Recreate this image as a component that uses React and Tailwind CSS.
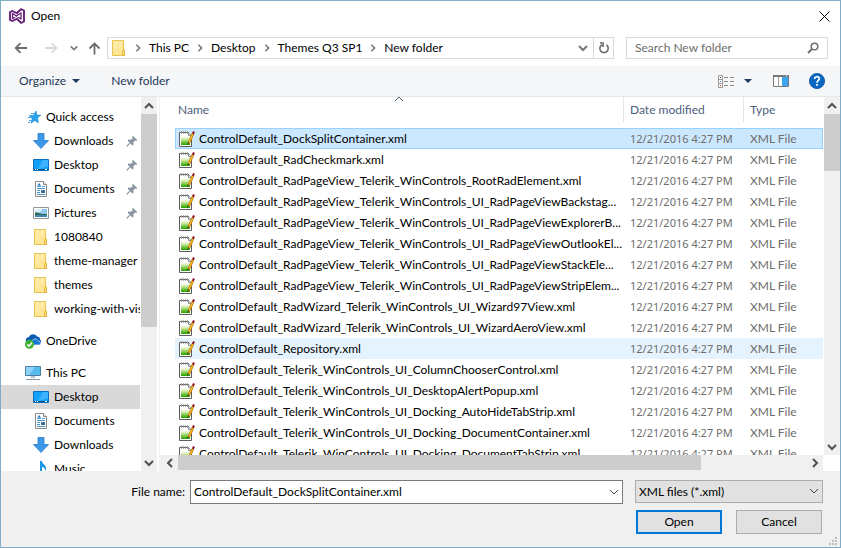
import React from "react";

const FILES = [
  "ControlDefault_DockSplitContainer.xml",
  "ControlDefault_RadCheckmark.xml",
  "ControlDefault_RadPageView_Telerik_WinControls_RootRadElement.xml",
  "ControlDefault_RadPageView_Telerik_WinControls_UI_RadPageViewBackstag...",
  "ControlDefault_RadPageView_Telerik_WinControls_UI_RadPageViewExplorerB...",
  "ControlDefault_RadPageView_Telerik_WinControls_UI_RadPageViewOutlookEl...",
  "ControlDefault_RadPageView_Telerik_WinControls_UI_RadPageViewStackEle...",
  "ControlDefault_RadPageView_Telerik_WinControls_UI_RadPageViewStripElem...",
  "ControlDefault_RadWizard_Telerik_WinControls_UI_Wizard97View.xml",
  "ControlDefault_RadWizard_Telerik_WinControls_UI_WizardAeroView.xml",
  "ControlDefault_Repository.xml",
  "ControlDefault_Telerik_WinControls_UI_ColumnChooserControl.xml",
  "ControlDefault_Telerik_WinControls_UI_DesktopAlertPopup.xml",
  "ControlDefault_Telerik_WinControls_UI_Docking_AutoHideTabStrip.xml",
  "ControlDefault_Telerik_WinControls_UI_Docking_DocumentContainer.xml",
  "ControlDefault_Telerik_WinControls_UI_Docking_DocumentTabStrip.xml",
];

const PATH = ["This PC", "Desktop", "Themes Q3 SP1", "New folder"];

function Chevron({ dir = "down", className = "" }) {
  const d = {
    down: "M1 3l4 4 4-4",
    up: "M1 7l4-4 4 4",
    left: "M7 1L3 5l4 4",
    right: "M3 1l4 4-4 4",
  }[dir];
  return (
    <svg viewBox="0 0 10 10" fill="none" stroke="currentColor" aria-hidden="true" className={`shrink-0 ${className}`}>
      <path d={d} />
    </svg>
  );
}

function Triangle() {
  return (
    <svg width="8" height="4" viewBox="0 0 8 4" aria-hidden="true">
      <path d="M0 0h8L4 4z" fill="#1e395b" />
    </svg>
  );
}

function FolderIcon() {
  return (
    <svg width="16" height="16" viewBox="0 0 16 16" aria-hidden="true">
      <path d="M1.500.5h11v9.500h1v5.500h-12z" fill="#ffe694" stroke="#e8c252" />
      <path d="M2 1h10v4L2 12z" fill="#ffeaa5" />
      <path d="M11.500 15.500v-4l1-1.500h1v5.500z" fill="#ffe082" stroke="#e3b53c" />
    </svg>
  );
}

function StarIcon() {
  return (
    <svg width="16" height="16" viewBox="0 0 16 16" aria-hidden="true">
      <path d="M11 2l.8 4 4 .3-3.300 2.500.8 5L9.800 11.500 6 14l1.200-4.200L4.500 6.700l4.200-.4z" fill="#29a3ee" stroke="#1686d0" strokeWidth=".6" />
      <path d="M6 4.500h3M4 6.500h2M3 8.500h4M4 11.500h3M3 13.500h2" stroke="#4aa8e0" />
    </svg>
  );
}

function DownloadIcon() {
  return (
    <svg width="16" height="16" viewBox="0 0 16 16" aria-hidden="true">
      <path d="M5 .5h6v7h4.500L8 15.500.5 7.500H5z" fill="#3b98e8" stroke="#2b7cc7" strokeWidth=".8" />
    </svg>
  );
}

function DesktopIcon() {
  return (
    <svg width="16" height="16" viewBox="0 0 16 16" aria-hidden="true">
      <path d="M.5 2.500h15v11H.5z" fill="#12a0fb" stroke="#0c6fc0" />
      <path d="M10 3h5v6L7 12H5z" fill="#3bb3ff" />
      <path d="M1 12.500h14" stroke="#064f91" />
      <path d="M2 12.500h1M4 12.500h1M12 12.500h2" stroke="#fff" />
    </svg>
  );
}

function DocumentIcon() {
  return (
    <svg width="16" height="16" viewBox="0 0 16 16" aria-hidden="true">
      <path d="M2.500.5h8l3 3v12h-11z" fill="#fff" stroke="#8a8a8a" />
      <path d="M10.500.5v3h3" fill="#eee" stroke="#8a8a8a" />
      <path d="M4.500 6l1.700-3.500L7.500 6M5 5h2.500" stroke="#1b7cc9" fill="none" />
      <path d="M9 5.500h3M4 7.500h8M4 9.500h3M4 11.500h3M4 13.500h8" stroke="#4b93c9" />
      <path d="M8 9h4v3H8z" fill="#3a6f9c" />
    </svg>
  );
}

function PicturesIcon() {
  return (
    <svg width="16" height="16" viewBox="0 0 16 16" aria-hidden="true">
      <path d="M.5 2.500h15v11H.5z" fill="#fff" stroke="#8f9498" />
      <path d="M2 4h12v8H2z" fill="#8cc8ee" />
      <path d="M2 4h7v2l-4 1.500H2z" fill="#d9eefb" />
      <path d="M2 7.500c3-.5 5 2 12 1.500v1H2z" fill="#2f6b4a" />
      <path d="M2 10h12v2H2z" fill="#3f86b5" />
    </svg>
  );
}

function OneDriveIcon() {
  return (
    <svg width="16" height="16" viewBox="0 0 16 16" aria-hidden="true">
      <path d="M1 9c-1-3 1-5 3-5 1-3 6-4 8-.5 2 0 3 1 3 3 2 1 1 4.500-1 4.500H3z" fill="#0b5cb5" />
      <path d="M5 12c-1-3 1-4.500 2.500-4.500C9 5 12 5.500 13 8c3 0 3.500 4 1 4z" fill="#1377d6" stroke="#fff" strokeWidth=".6" />
      <circle cx="4.500" cy="11.300" r="4.500" fill="#3fb034" />
      <path d="M2.200 11.300l1.800 1.900 3-3.500" stroke="#fff" strokeWidth="1.400" fill="none" />
    </svg>
  );
}

function ComputerIcon() {
  return (
    <svg width="16" height="16" viewBox="0 0 16 16" aria-hidden="true">
      <path d="M.5 1.500h15v9H.5z" fill="#58b8f0" stroke="#4d7f9e" />
      <path d="M1 2h9L4 10H1z" fill="#8fd3f8" />
      <path d="M6 11h4v2H6z" fill="#b5c3cc" />
      <path d="M1 14.500h14" stroke="#8499a6" />
    </svg>
  );
}

function MusicIcon() {
  return (
    <svg width="16" height="16" viewBox="0 0 16 16" aria-hidden="true">
      <path d="M7 0h2c0 3 4 4 4 7 0 2-1 3-1 3 0-3-1-4-3-4v7c0 3-5 3.500-5 1s2-2.500 3-2z" fill="#1b95e8" />
    </svg>
  );
}

function PinIcon() {
  return (
    <svg width="12" height="12" viewBox="0 0 12 12" aria-hidden="true">
      <path d="M7 .8L11.200 5l-1 .9-1.200-.3-1.600 1.800.2 2.200-1.100 1L1.600 5.700l1-1.100 2.200.2L6.600 3.200 6.200 1.800z" fill="#8b97a3" />
      <path d="M4.200 7.800L.7 11.300" stroke="#8b97a3" strokeWidth="1.200" />
    </svg>
  );
}

function XmlIcon() {
  return (
    <svg width="16" height="16" viewBox="0 0 16 16" aria-hidden="true" className="shrink-0">
      <defs>
        <linearGradient id="page" x1="0" y1="0" x2="0" y2="1">
          <stop offset=".2" stopColor="#fff" />
          <stop offset=".45" stopColor="#d5edaa" />
          <stop offset=".95" stopColor="#2fa800" />
        </linearGradient>
      </defs>
      <path d="M.5 1.500h9l3 3v11H.5z" fill="#fff" stroke="#5c5c5c" />
      <path d="M2 3h7l2 2v9H2z" fill="url(#page)" />
      <path d="M9.500 1.500v3h3" fill="#f2f2f2" stroke="#777" strokeWidth=".8" />
      <path d="M2.500 0v3M4.500 0v3M6.500 0v3M8.500 0v3" stroke="#999" strokeWidth=".8" />
      <path d="M13.800 3L9.800 12" stroke="#8a6a18" strokeWidth="2.600" />
      <path d="M13.800 3L9.800 11.800" stroke="#f8b01c" strokeWidth="1.800" />
      <path d="M8.600 11.300l1.800.8-1.900 1.900z" fill="#4a3a20" />
      <path d="M13.800 3l1.200-2.500" stroke="#8c1020" strokeWidth="2" />
    </svg>
  );
}

const TREE = [
  { label: "Quick access", Icon: StarIcon, root: true },
  { label: "Downloads", Icon: DownloadIcon, pin: true },
  { label: "Desktop", Icon: DesktopIcon, pin: true },
  { label: "Documents", Icon: DocumentIcon, pin: true },
  { label: "Pictures", Icon: PicturesIcon, pin: true },
  { label: "1080840", Icon: FolderIcon },
  { label: "theme-manager", Icon: FolderIcon },
  { label: "themes", Icon: FolderIcon },
  { label: "working-with-vis", Icon: FolderIcon },
  { label: "OneDrive", Icon: OneDriveIcon, root: true, gap: true },
  { label: "This PC", Icon: ComputerIcon, root: true, gap: true },
  { label: "Desktop", Icon: DesktopIcon, current: true },
  { label: "Documents", Icon: DocumentIcon },
  { label: "Downloads", Icon: DownloadIcon },
  { label: "Music", Icon: MusicIcon },
];

function VerticalScroll({ thumb }) {
  return (
    <div className="flex w-4 shrink-0 flex-col bg-[#f0f0f0] text-[#505050]">
      <button aria-label="Scroll up" className="grid h-[17px] shrink-0 place-items-center">
        <Chevron dir="up" className="w-2.5 stroke-2" />
      </button>
      <div className="min-h-0 flex-1">
        <div className={`bg-[#cdcdcd] ${thumb}`} />
      </div>
      <button aria-label="Scroll down" className="grid h-[17px] shrink-0 place-items-center">
        <Chevron className="w-2.5 stroke-2" />
      </button>
    </div>
  );
}

function TitleBar() {
  return (
    <header className="flex h-[30px] shrink-0 items-center pl-2 pr-2.5">
      <svg width="16" height="16" viewBox="0 0 16 16" fill="none" aria-hidden="true">
        <path d="M12 1.200l3 1.300v11l-3 1.300-4.200-4L3.200 13 1 11.800V4.200L3.200 3l4.600 2.200z" stroke="#68217a" strokeWidth="1.900" strokeLinejoin="round" />
        <path d="M3.500 5.500L12 11V5l-8.500 5.500z" stroke="#68217a" strokeWidth="1.300" strokeLinejoin="round" />
      </svg>
      <h1 className="ml-1.5">Open</h1>
      <button aria-label="Close" className="ml-auto">
        <svg width="11" height="11" viewBox="0 0 11 11" stroke="#000" aria-hidden="true">
          <path d="M.5.5l10 10M10.500.5l-10 10" />
        </svg>
      </button>
    </header>
  );
}

function AddressRow() {
  return (
    <div className="flex shrink-0 items-center px-3 pb-[7px] pt-1.5">
      <button aria-label="Back" className="w-[30px] pl-px">
        <svg width="14" height="12" viewBox="0 0 14 12" fill="none" stroke="#6d6d6d" strokeWidth="1.800">
          <path d="M13 6H2M6.500 1.200L1.700 6l4.800 4.800" />
        </svg>
      </button>
      <button aria-label="Forward" disabled className="w-[26px] pl-px">
        <svg width="14" height="12" viewBox="0 0 14 12" fill="none" stroke="#d8d8d8" strokeWidth="1.800">
          <path d="M1 6h11M7.500 1.200L12.300 6l-4.800 4.800" />
        </svg>
      </button>
      <button aria-label="Recent locations" className="w-[19px] pl-px text-[#777]">
        <Chevron className="w-2 stroke-2" />
      </button>
      <button aria-label="Up" className="w-[19px]">
        <svg width="13" height="13" viewBox="0 0 13 13" fill="none" stroke="#6d6d6d" strokeWidth="1.800">
          <path d="M6.500 12.500V2M1.500 6.500l5-5 5 5" />
        </svg>
      </button>
      <div className="flex h-[22px] min-w-0 flex-1 border border-[#d9d9d9]">
        <nav aria-label="Address" className="flex min-w-0 flex-1 items-center pl-[3px]">
          <FolderIcon />
          {PATH.map((p) => (
            <React.Fragment key={p}>
              <span className="flex w-[22px] justify-center text-[#777]">
                <Chevron dir="right" className="w-2 stroke-2" />
              </span>
              <a href="#" className="whitespace-nowrap">{p}</a>
            </React.Fragment>
          ))}
        </nav>
        <button aria-label="Previous locations" className="grid w-5 place-items-center text-[#777]">
          <Chevron className="w-2.5 stroke-2" />
        </button>
        <button aria-label="Refresh" className="grid w-5 place-items-center border-l border-[#d9d9d9]">
          <svg width="12" height="12" viewBox="0 0 12 12" fill="none" stroke="#6d6d6d" strokeWidth="1.600">
            <path d="M4 2.700A4.200 4.200 0 1 0 8.500 3M2 1h3v4" />
          </svg>
        </button>
      </div>
      <div className="ml-3 flex h-[22px] w-[202px] items-center border border-[#d9d9d9] px-2">
        <input aria-label="Search New folder" placeholder="Search New folder" className="min-w-0 flex-1 bg-transparent outline-none placeholder:text-[#6d6d6d]" />
        <svg width="12" height="12" viewBox="0 0 12 12" fill="none" stroke="#6d6d6d" aria-hidden="true">
          <circle cx="7.500" cy="4.500" r="3.300" strokeWidth="1.500" />
          <path d="M5 7L1 11" strokeWidth="2" />
        </svg>
      </div>
    </div>
  );
}

function Toolbar() {
  return (
    <div className="flex h-[31px] shrink-0 items-center border-b border-[#e5e6e7] bg-[#f5f6f7] pl-[18px] pr-[15px] text-[#1e395b]">
      <button className="flex items-center gap-1.5">
        Organize <Triangle />
      </button>
      <button className="ml-[31px]">New folder</button>
      <button aria-label="Change your view" className="ml-auto flex items-center gap-[9px]">
        <svg width="17" height="13" viewBox="0 0 17 13" fill="none" aria-hidden="true">
          <path d="M.5.5h4v12h-4zM.5 4.500h4M.5 8.500h4" stroke="#9a9a9a" fill="#fff" />
          <path d="M6 2.500h4M12 2.500h4M6 6.500h4M12 6.500h4M6 10.500h4M12 10.500h4" stroke="#8a8a8a" />
          <path d="M2 2.500h1" stroke="#333" />
          <path d="M2 6.500h1" stroke="#2a8ae0" />
          <path d="M2 10.500h1" stroke="#e02020" />
        </svg>
        <Triangle />
      </button>
      <button aria-label="Preview pane" className="ml-[21px]">
        <svg width="16" height="12" viewBox="0 0 16 12" aria-hidden="true">
          <path d="M.5.5h15v11H.5z" fill="#fff" stroke="#777" />
          <path d="M0 1h16" stroke="#777" strokeWidth="2" />
          <path d="M5.500 2v10" stroke="#999" />
          <path d="M9 2h6v9H9z" fill="#3ba4f2" />
          <path d="M13 1h1" stroke="#fff" />
        </svg>
      </button>
      <button aria-label="Help" className="ml-5">
        <svg width="16" height="16" viewBox="0 0 16 16" fill="none" aria-hidden="true">
          <circle cx="8" cy="8" r="7.600" fill="#0a67c4" stroke="#08519c" strokeWidth=".8" />
          <path d="M5.600 6C5.600 3 10.300 3 10.300 5.800 10.300 7.600 8 7.500 8 9.800" stroke="#fff" strokeWidth="1.700" />
          <path d="M7.100 11h1.800v1.800H7.100z" fill="#fff" />
        </svg>
      </button>
    </div>
  );
}

function Sidebar() {
  return (
    <aside className="flex w-[156px] shrink-0 overflow-hidden">
      <ul className="mr-px min-w-0 flex-1 overflow-hidden pt-2">
        {TREE.map(({ label, Icon, root, pin, gap, current }, i) => (
          <li key={i} className={gap ? "mt-2" : ""}>
            <a
              href="#"
              className={`flex h-6 items-center gap-[5px] overflow-hidden whitespace-nowrap pr-0.5 ${root ? "pl-6" : "pl-8"} ${current ? "bg-[#d9d9d9]" : ""}`}
            >
              <span className="shrink-0"><Icon /></span>
              <span>{label}</span>
              {pin && <span className="ml-auto shrink-0"><PinIcon /></span>}
            </a>
          </li>
        ))}
      </ul>
      <VerticalScroll thumb="h-[213px]" />
    </aside>
  );
}

function FileList() {
  return (
    <main className="flex min-w-0 flex-1 flex-col">
      <div className="flex min-h-0 flex-1">
        <div className="min-w-0 flex-1 overflow-hidden pl-[15px] pr-px">
          <table className="w-full table-fixed border-collapse text-left">
            <colgroup>
              <col />
              <col className="w-[120px]" />
              <col className="w-20" />
            </colgroup>
            <thead className="text-[#4c607a]">
              <tr className="h-[31px] align-top">
                <th className="relative p-0 font-normal">
                  <Chevron dir="up" className="absolute -top-[3px] left-1/2 w-2.5 -translate-x-1/2" />
                  <div className="flex h-[25px] items-center pl-[3px]">Name</div>
                </th>
                <th className="p-0 font-normal">
                  <div className="flex h-[25px] items-center border-l border-[#e5e5e5] pl-1.5">Date modified</div>
                </th>
                <th className="p-0 font-normal">
                  <div className="flex h-[25px] items-center border-l border-[#e5e5e5] pl-1.5">Type</div>
                </th>
              </tr>
            </thead>
            <tbody>
              {FILES.map((name, i) => (
                <tr
                  key={name}
                  className={`h-[21px] ${i === 0 ? "bg-[#cce8ff] outline outline-1 -outline-offset-1 outline-[#99d1ff]" : i === 10 ? "bg-[#e5f3ff]" : ""}`}
                >
                  <td className="p-0">
                    <div className="flex items-center gap-1 whitespace-nowrap pl-1">
                      <XmlIcon />
                      {name}
                    </div>
                  </td>
                  <td className="whitespace-nowrap p-0 pl-[7px] font-['Noto_Sans',sans-serif] text-[11px] text-[#6d6d6d]">12/21/2016 4:27 PM</td>
                  <td className="whitespace-nowrap p-0 pl-[7px] text-[#6d6d6d]">XML File</td>
                </tr>
              ))}
            </tbody>
          </table>
        </div>
        <VerticalScroll thumb="h-[57px]" />
      </div>
      <div className="mr-[17px] flex h-4 shrink-0 bg-[#f0f0f0] pl-px text-[#505050]">
        <button aria-label="Scroll left" className="grid w-[17px] place-items-center">
          <Chevron dir="left" className="w-2.5 stroke-2" />
        </button>
        <div className="flex-1">
          <div className="h-[15px] w-5/6 bg-[#cdcdcd]" />
        </div>
        <button aria-label="Scroll right" className="grid w-[17px] place-items-center">
          <Chevron dir="right" className="w-2.5 stroke-2" />
        </button>
      </div>
    </main>
  );
}

function Footer() {
  return (
    <footer className="relative flex h-[76px] shrink-0 justify-end bg-[#f0f0f0] pl-4 pr-[17px] pt-[9px]">
      <div className="flex min-w-0 flex-1 items-start justify-end gap-[5px]">
        <label htmlFor="file-name" className="leading-6">File name:</label>
        <div className="flex h-6 w-[433px] border border-[#7a7a7a] bg-white">
          <input id="file-name" defaultValue="ControlDefault_DockSplitContainer.xml" className="min-w-0 flex-1 bg-transparent pl-[3px] outline-none" />
          <button aria-label="Show recent files" className="grid w-[17px] place-items-center text-[#444]">
            <Chevron className="w-2.5" />
          </button>
        </div>
      </div>
      <div className="ml-3 w-[188px]">
        <div className="relative">
          <select aria-label="File type" className="block h-[23px] w-full appearance-none border border-[#adadad] bg-[#e1e1e1] pl-[3px] outline-none">
            <option>XML files (*.xml)</option>
          </select>
          <Chevron className="pointer-events-none absolute right-1 top-1.5 w-2.5 text-[#444]" />
        </div>
        <div className="mt-[7px] flex justify-between px-px">
          <button className="h-6 w-[86px] border-2 border-[#0078d7] bg-[#e1e1e1]">Open</button>
          <button className="h-6 w-[86px] border border-[#adadad] bg-[#e1e1e1]">Cancel</button>
        </div>
      </div>
      <svg width="8" height="8" viewBox="0 0 8 8" fill="#bfbfbf" aria-hidden="true" className="absolute bottom-0.5 right-[3px]">
        <path d="M6 0h2v2H6zM3 3h2v2H3zM6 3h2v2H6zM0 6h2v2H0zM3 6h2v2H3zM6 6h2v2H6z" />
      </svg>
    </footer>
  );
}

export default function App() {
  return (
    <div className="flex h-screen flex-col overflow-hidden border border-[#83acc4] bg-white font-['Lato','Open_Sans',sans-serif] text-[12px] leading-4 text-black">
      <TitleBar />
      <AddressRow />
      <Toolbar />
      <div className="flex min-h-0 flex-1">
        <Sidebar />
        <div className="ml-0.5 w-px shrink-0 bg-[#f0f0f0]" />
        <FileList />
      </div>
      <Footer />
    </div>
  );
}
